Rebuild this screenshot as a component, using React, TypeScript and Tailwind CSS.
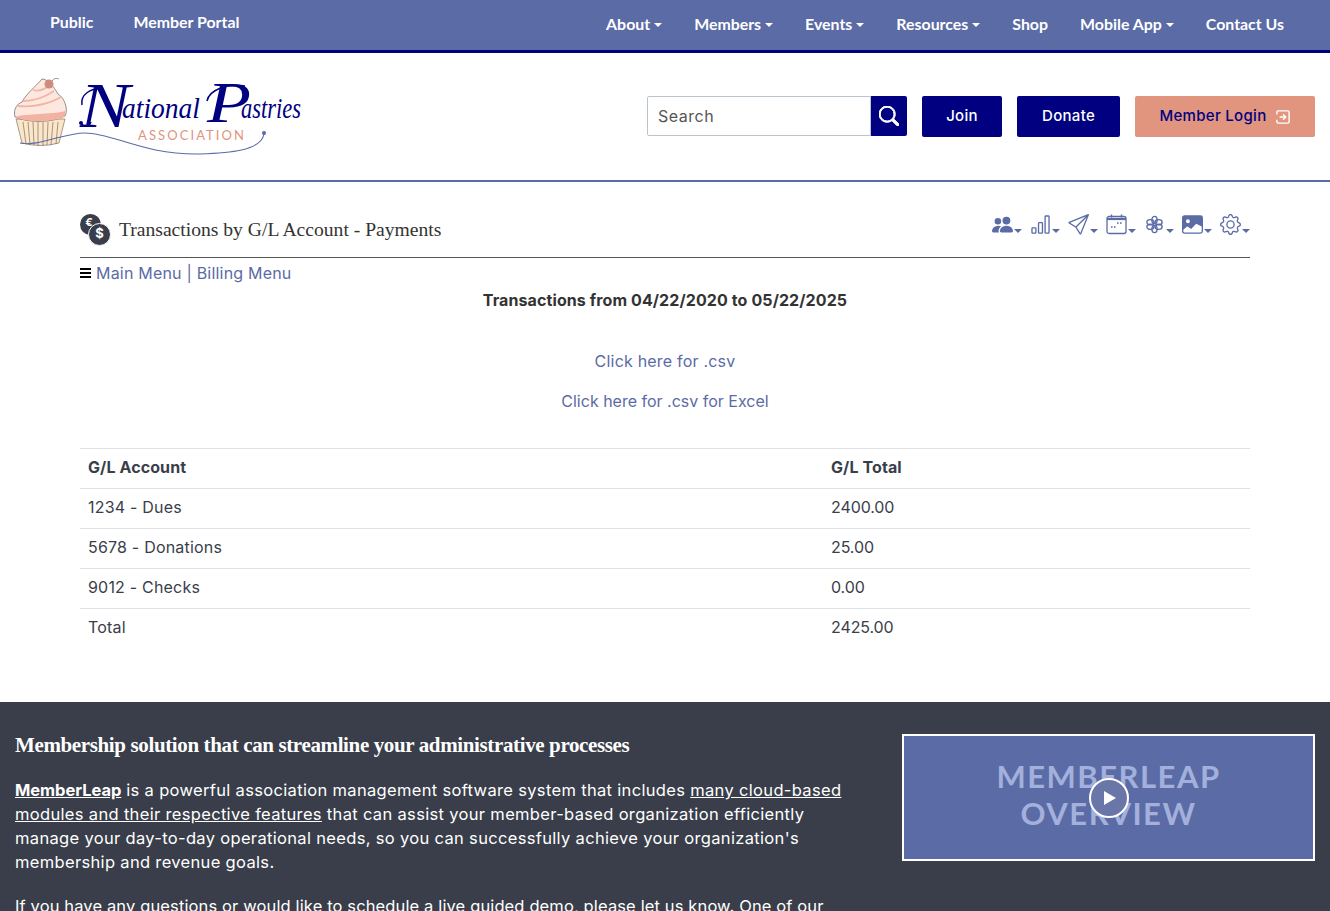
import { BsBarChart, BsGear, BsImageFill, BsPeopleFill, BsSearch, BsSend } from "react-icons/bs";
import type { IconType } from "react-icons";

const BODY = "font-['Inter','Noto_Sans',sans-serif]";
const NAV_RIGHT = [
  { label: "About", caret: true },
  { label: "Members", caret: true },
  { label: "Events", caret: true },
  { label: "Resources", caret: true },
  { label: "Shop", caret: false },
  { label: "Mobile App", caret: true },
  { label: "Contact Us", caret: false },
];
const ROWS = [
  ["1234 - Dues", "2400.00"],
  ["5678 - Donations", "25.00"],
  ["9012 - Checks", "0.00"],
  ["Total", "2425.00"],
];

// bootstrap has no close match for these two, so they are drawn by hand
const CalendarIcon: IconType = (props) => (
  <svg viewBox="0 0 21 21" fill="none" stroke="currentColor" {...props}>
    <rect x="1" y="2.5" width="19" height="17" rx="2" strokeWidth="1.3" />
    <path d="M1 5h19" strokeWidth="2.2" />
    <path d="M5.5 0.5v3M15.5 0.5v3" strokeWidth="1.4" />
    <path d="M11 9h1.6M14 9h1.6M5 13h1.6M8 13h1.6" strokeWidth="1.7" />
  </svg>
);
const FlowerIcon: IconType = (props) => (
  <svg viewBox="0 0 21 21" fill="none" stroke="currentColor" strokeWidth="1.4" {...props}>
    <ellipse cx="10.5" cy="6" rx="2.6" ry="3.6" />
    <ellipse cx="10.5" cy="15" rx="2.6" ry="3.6" />
    <ellipse cx="6.4" cy="8.2" rx="3.5" ry="2.6" />
    <ellipse cx="14.6" cy="8.2" rx="3.5" ry="2.6" />
    <ellipse cx="6.4" cy="12.8" rx="3.5" ry="2.6" />
    <ellipse cx="14.6" cy="12.8" rx="3.5" ry="2.6" />
  </svg>
);
const LoginIcon: IconType = (props) => (
  <svg viewBox="0 0 16 16" fill="none" stroke="currentColor" strokeWidth="1.6" {...props}>
    <path d="M1 5V2.5A1.5 1.5 0 0 1 2.5 1h11A1.5 1.5 0 0 1 15 2.5v11a1.5 1.5 0 0 1-1.5 1.5h-11A1.5 1.5 0 0 1 1 13.5V11" />
    <path d="M4 8h7M8 4.8 11.2 8 8 11.2" />
  </svg>
);

const TOOLS: IconType[] = [BsPeopleFill, BsBarChart, BsSend, CalendarIcon, FlowerIcon, BsImageFill, BsGear];

function Logo() {
  return (
    <svg width="290" height="84" viewBox="0 0 290 84" className="overflow-visible" aria-label="National Pastries Association">
      {/* cupcake */}
      <path d="M3 44 L9 68 Q28 73 46 68 L52 44 Z" fill="#fbe6c8" stroke="#6b5b55" strokeWidth="0.6" />
      <path d="M10 47 L13 69 M15 47 L17 70 M20 47 L21 70 M25 47 L25 71 M30 47 L30 71 M35 47 L34 70 M40 47 L38 70 M45 47 L43 69" stroke="#6b5b55" strokeWidth="0.6" fill="none" />
      <path d="M2 42 C0 34 4 29 9 27 C13 19 22 12 29 4 C35 4 41 12 45 19 C53 24 55 36 52 41 C40 48 14 48 2 42 Z" fill="#fde8df" stroke="#55494a" strokeWidth="0.6" />
      <path d="M2 42 C14 38 38 40 52 36 C53 40 51 42 47 44 C30 47 12 47 2 42 Z" fill="#f2b3a3" />
      <path d="M5 31 C20 33 38 28 48 22 M10 26 C20 26 32 22 41 16 M20 15 C26 17 32 14 37 10" stroke="#f0b5a5" strokeWidth="1.8" fill="none" />
      <circle cx="36" cy="9" r="4.5" fill="#cf8b7b" />
      <path d="M39 6 C41 3 44 3 46 4" stroke="#55494a" strokeWidth="0.6" fill="none" />
      {/* swoosh */}
      <path d="M7 68 C25 72 50 58 72 58 C100 58 130 80 187 79 C215 78 248 76 251 59" stroke="#5b6ba5" strokeWidth="1.1" fill="none" />
      <circle cx="251" cy="58" r="2" fill="#5b6ba5" />
      {/* wordmark */}
      <text x="67" y="52" fontFamily="'Liberation Serif',serif" fontStyle="italic" fontSize="63" fill="#000080" textLength="50" lengthAdjust="spacingAndGlyphs">N</text>
      <text x="109" y="43" fontFamily="'Liberation Serif',serif" fontStyle="italic" fontSize="30" fill="#000080" textLength="78" lengthAdjust="spacingAndGlyphs">ational</text>
      <text x="194" y="47" fontFamily="'Liberation Serif',serif" fontStyle="italic" fontSize="58" fill="#000080" textLength="44" lengthAdjust="spacingAndGlyphs">P</text>
      <text x="228" y="43" fontFamily="'Liberation Serif',serif" fontStyle="italic" fontSize="30" fill="#000080" textLength="60" lengthAdjust="spacingAndGlyphs">astries</text>
      <path d="M68 48 C70 52 76 52 78 47 M69 30 C67 20 78 12 90 14 M194 26 C196 15 214 8 232 11" stroke="#000080" strokeWidth="1.5" fill="none" />
      <circle cx="68" cy="48" r="2" fill="#000080" />
      <text x="125" y="65" fontFamily="Lato,sans-serif" fontSize="13" fill="#e1947e" textLength="106">ASSOCIATION</text>
    </svg>
  );
}

function Coins() {
  return (
    <div className="relative h-[32px] w-[31px] shrink-0 text-white">
      <span className="absolute left-0 top-0 flex h-[21px] w-[21px] items-center justify-center rounded-full bg-[#393e4a] pb-[3px] pr-[3px] text-[11px] font-bold">€</span>
      <span className="absolute left-[8px] top-[9px] flex h-[23px] w-[23px] items-center justify-center rounded-full border border-white bg-[#393e4a] text-[13px] font-bold">$</span>
    </div>
  );
}

export default function App() {
  return (
    <div className={`h-[911px] overflow-hidden bg-white text-[16px] text-[#393e4a] ${BODY}`}>
      <nav className="flex h-[53px] items-start justify-between border-b-[3px] border-[#000080] bg-[#5b6ba5] pl-[50px] pr-[46px] font-['Lato',sans-serif] text-[15.9px] font-bold text-white">
        <div className="flex gap-[40px] pt-[10px]">
          <a>Public</a>
          <a>Member Portal</a>
        </div>
        <div className="flex gap-[32px] pt-[12px]">
          {NAV_RIGHT.map((item) => (
            <a key={item.label} className="flex items-center gap-[4px]">
              {item.label}
              {item.caret && <span className="mt-[2px] h-0 w-0 border-x-[4px] border-t-[4px] border-x-transparent border-t-white" />}
            </a>
          ))}
        </div>
      </nav>

      <header className="flex h-[129px] items-center justify-between border-b-2 border-[#5b6ba5] pl-[13px] pr-[15px]">
        <Logo />
        <div className="flex items-start gap-[15px]">
          <div className="flex h-[40px]">
            <div className="flex w-[224px] items-center rounded-l-[2px] border border-[#b9c4cc] pl-[10px] tracking-[0.5px] text-[#555]">Search</div>
            <button className="flex w-[36px] items-center justify-center rounded-r-[2px] bg-[#000080] text-white">
              <BsSearch className="size-[20px]" stroke="currentColor" strokeWidth={0.8} />
            </button>
          </div>
          <button className="h-[41px] w-[80px] rounded-[2px] bg-[#000080] text-[15px] font-medium tracking-[0.3px] text-white">Join</button>
          <button className="h-[41px] w-[103px] rounded-[2px] bg-[#000080] text-[15px] font-medium tracking-[0.3px] text-white">Donate</button>
          <button className="flex h-[41px] w-[180px] items-center justify-center gap-[10px] rounded-[2px] bg-[#e1947e] text-[15px] font-medium tracking-[0.3px] text-[#000080]">
            Member Login
            <LoginIcon className="size-[14px] text-white" />
          </button>
        </div>
      </header>

      <main className="h-[520px] px-[80px] pt-[30px]">
        <div className="flex h-[46px] items-start justify-between border-b border-[#555]">
          <div className="flex items-center gap-[8px]">
            <Coins />
            <h1 className="pt-[1px] font-['Liberation_Serif',serif] text-[19.6px] font-normal leading-[34px] text-[#333]">Transactions by G/L Account - Payments</h1>
          </div>
          <div className="flex items-center gap-[8px] pt-[2px] text-[#5b6ba5]">
            {TOOLS.map((Icon, i) => (
              <span key={i} className="flex items-end gap-[1px]">
                <Icon className="size-[21px]" />
                <span className="mb-[2px] h-0 w-0 border-x-[4px] border-t-[4px] border-x-transparent border-t-[#5b6ba5]" />
              </span>
            ))}
          </div>
        </div>

        <div className="flex h-[30px] items-center gap-[5px] tracking-[0.2px] text-[#5b6ba5]">
          <span className="flex w-[11px] flex-col gap-[2px]">
            <i className="h-[2px] bg-black" />
            <i className="h-[2px] bg-black" />
            <i className="h-[2px] bg-black" />
          </span>
          <span>Main Menu | Billing Menu</span>
        </div>
        <p className="text-center text-[16px] font-bold leading-[24px] tracking-[0.1px] text-[#333]">Transactions from 04/22/2020 to 05/22/2025</p>
        <p className="mt-[37px] text-center leading-[24px] tracking-[0.2px] text-[#5b6ba5]">Click here for .csv</p>
        <p className="mt-[16px] text-center leading-[24px] text-[#5b6ba5]">Click here for .csv for Excel</p>

        <table className="mt-[35px] w-full border-t border-[#dee2e6]">
          <thead>
            <tr className="h-[40px] border-b border-[#dee2e6] text-left">
              <th className="w-[743px] pb-[4px] pl-[8px] font-bold tracking-[0.1px]">G/L Account</th>
              <th className="pb-[4px] pl-[8px] font-bold tracking-[0.1px]">G/L Total</th>
            </tr>
          </thead>
          <tbody>
            {ROWS.map(([account, total], i) => (
              <tr key={account} className={i < ROWS.length - 1 ? "h-[40px] border-b border-[#dee2e6]" : "h-[40px]"}>
                <td className="pb-[4px] pl-[8px] tracking-[0.2px]">{account}</td>
                <td className="pb-[4px] pl-[8px] tracking-[-0.1px]">{total}</td>
              </tr>
            ))}
          </tbody>
        </table>
      </main>

      <footer className="flex h-[300px] justify-between bg-[#393e4a] pl-[15px] pr-[15px] pt-[31px] text-white">
        <div className="w-[840px]">
          <h2 className="pt-[1px] font-['Liberation_Serif',serif] text-[21px] font-bold leading-[23px] tracking-[-0.37px]">Membership solution that can streamline your administrative processes</h2>
          <p className="mt-[21px] text-[16.5px] leading-[24px] tracking-[0.33px]">
            <a className="font-bold tracking-[-0.05px] underline">MemberLeap</a> is a powerful association management software system that includes <a className="underline">many cloud-based modules and their respective features</a> that can assist your member-based organization efficiently manage your day-to-day operational needs, so you can successfully achieve your organization's membership and revenue goals.
          </p>
          <p className="mt-[20px] text-[16.5px] leading-[24px] tracking-[0.13px]">If you have any questions or would like to schedule a live guided demo, please let us know. One of our</p>
        </div>
        <div className="relative mt-[1px] flex h-[127px] w-[413px] flex-col items-center justify-center border-2 border-white bg-[#5b6ba5] pb-[6px] font-['Lato',sans-serif] text-[31px] font-bold leading-[37px] tracking-[1.5px] text-[#a3b0dc]">
          <span>MEMBERLEAP</span>
          <span>OVERVIEW</span>
          <span className="absolute left-1/2 top-1/2 flex h-[40px] w-[40px] -translate-x-1/2 -translate-y-1/2 items-center justify-center rounded-full border-2 border-white bg-[#6a76a8]">
            <span className="ml-[3px] h-0 w-0 border-y-[7px] border-l-[12px] border-y-transparent border-l-white" />
          </span>
        </div>
      </footer>
    </div>
  );
}
